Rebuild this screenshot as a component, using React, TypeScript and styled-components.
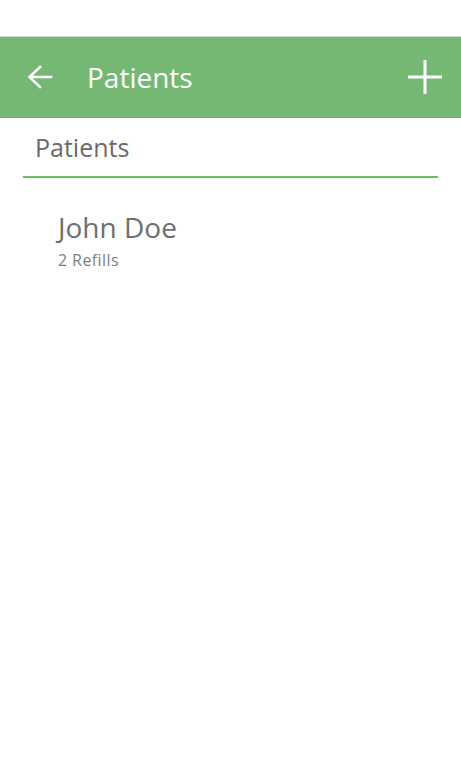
import React from "react";
import styled, { createGlobalStyle } from "styled-components";

const GlobalStyle = createGlobalStyle`
  html, body {
    margin: 0;
    padding: 0;
    background: #ffffff;
    font-family: 'Open Sans', 'Noto Sans', sans-serif;
  }
`;

const Screen = styled.div`
  width: 461px;
  min-height: 768px;
  background: #ffffff;
  padding-top: 36px;
  box-sizing: border-box;
`;

const Toolbar = styled.header`
  height: 80px;
  background-color: #75b873;
  border-top: 1px solid #d8d8d8;
  border-bottom: 1px solid #6cb46a;
  display: flex;
  align-items: center;
  padding: 0 18px 0 27px;
`;

const IconButton = styled.button`
  background: none;
  border: none;
  padding: 0;
  display: flex;
  align-items: center;
  justify-content: center;
  cursor: pointer;
`;

const Title = styled.h1`
  flex: 1;
  margin: 0 0 0 34px;
  font-size: 28px;
  font-weight: 400;
  color: #ffffff;
  line-height: 1;
`;

const SearchField = styled.div`
  margin: 0 23px;
  border-bottom: 2px solid #6cbd64;
  height: 58px;
  display: flex;
  align-items: center;
  padding-left: 12px;
`;

const SearchInput = styled.input`
  border: none;
  outline: none;
  background: transparent;
  font-family: 'Open Sans', 'Noto Sans', sans-serif;
  font-size: 25px;
  color: #6a6a6a;
  width: 100%;
  padding: 0;
`;

const PatientList = styled.ul`
  list-style: none;
  margin: 0;
  padding: 31px 0 0 58px;
`;

const PatientRow = styled.li`
  display: flex;
  flex-direction: column;
`;

const PatientName = styled.span`
  font-size: 28px;
  color: #6e6e6e;
  line-height: 36px;
`;

const PatientMeta = styled.span`
  margin-top: 4px;
  font-size: 16px;
  letter-spacing: 0.4px;
  color: #7e7e7e;
  line-height: 22px;
`;

const patients = [{ id: 1, name: "John Doe", refills: 2 }];

const App: React.FC = () => {
  return (
    <Screen>
      <GlobalStyle />
      <Toolbar>
        <IconButton aria-label="Back">
          <svg width="26" height="24" viewBox="0 0 26 24" fill="none">
            <path
              d="M24 12H3M13 2L2.5 12L13 22"
              stroke="#ffffff"
              strokeWidth="2.6"
              strokeLinecap="square"
            />
          </svg>
        </IconButton>
        <Title>Patients</Title>
        <IconButton aria-label="Add patient">
          <svg width="36" height="36" viewBox="0 0 36 36" fill="none">
            <path d="M18 1V35M1 18H35" stroke="#ffffff" strokeWidth="3" />
          </svg>
        </IconButton>
      </Toolbar>
      <SearchField>
        <SearchInput defaultValue="Patients" />
      </SearchField>
      <PatientList>
        {patients.map((p) => (
          <PatientRow key={p.id}>
            <PatientName>{p.name}</PatientName>
            <PatientMeta>{p.refills} Refills</PatientMeta>
          </PatientRow>
        ))}
      </PatientList>
    </Screen>
  );
};

export default App;
